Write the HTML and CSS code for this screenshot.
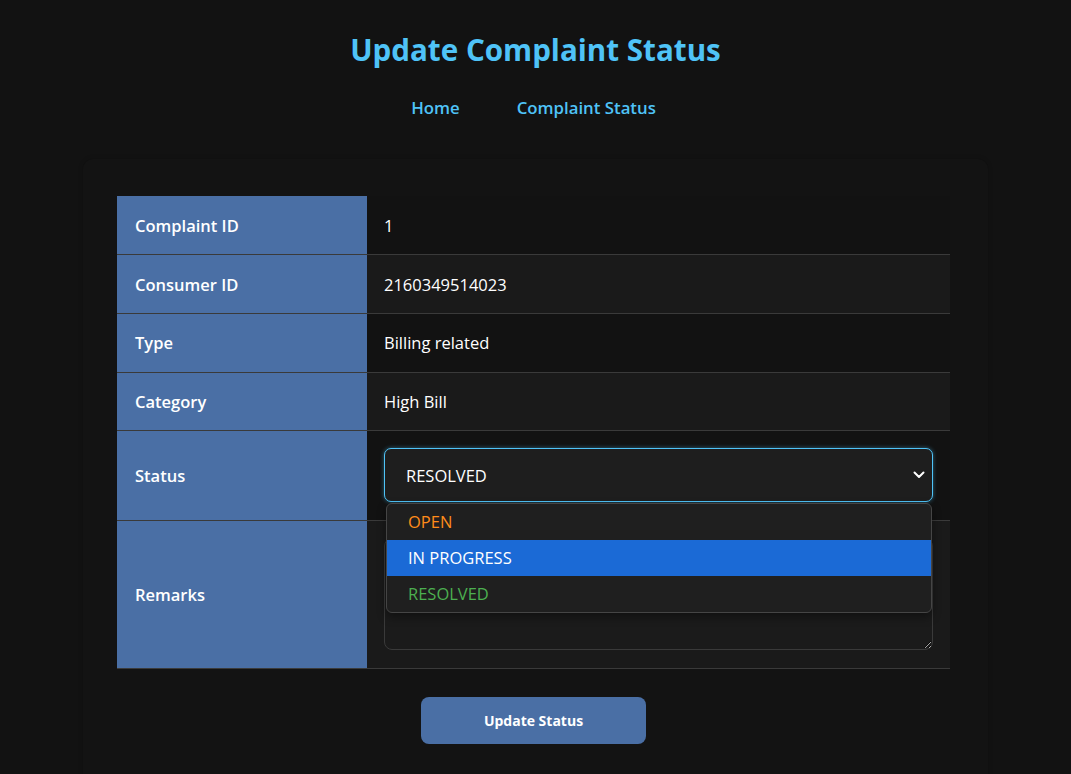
FILE: index.html
```html
<!DOCTYPE html>
<html lang="en">
<head>
<meta charset="utf-8">
<title>Update Complaint Status</title>
<link rel="stylesheet" href="styles.css">
</head>
<body>
<header class="header">
  <h1 class="title">Update Complaint Status</h1>
  <nav class="nav">
    <a class="nav-link" href="#">Home</a>
    <a class="nav-link" href="#">Complaint Status</a>
  </nav>
</header>
<main class="card">
  <form class="form">
    <table class="details">
      <tr class="row">
        <th class="label">Complaint ID</th>
        <td class="value">1</td>
      </tr>
      <tr class="row alt">
        <th class="label">Consumer ID</th>
        <td class="value">2160349514023</td>
      </tr>
      <tr class="row">
        <th class="label">Type</th>
        <td class="value">Billing related</td>
      </tr>
      <tr class="row alt">
        <th class="label">Category</th>
        <td class="value">High Bill</td>
      </tr>
      <tr class="row">
        <th class="label">Status</th>
        <td class="value field-cell">
          <div class="select-wrap">
            <div class="select">
              <span>RESOLVED</span>
              <svg class="chevron" width="12" height="8" viewBox="0 0 12 8"><path d="M1.5 1.5 L6 6 L10.5 1.5" fill="none" stroke="#ffffff" stroke-width="2" stroke-linecap="round" stroke-linejoin="round"/></svg>
            </div>
            <ul class="options">
              <li class="option open">OPEN</li>
              <li class="option active">IN PROGRESS</li>
              <li class="option resolved">RESOLVED</li>
            </ul>
          </div>
        </td>
      </tr>
      <tr class="row alt">
        <th class="label">Remarks</th>
        <td class="value field-cell">
          <textarea class="remarks"></textarea>
        </td>
      </tr>
    </table>
    <div class="actions">
      <button type="button" class="btn">Update Status</button>
    </div>
  </form>
</main>
</body>
</html>
```

FILE: styles.css
```css
* { box-sizing: border-box; }

html, body {
  margin: 0;
  padding: 0;
  background: #121212;
  height: 100%;
  overflow: hidden;
}

body {
  font-family: "Open Sans", "Noto Sans", sans-serif;
  color: #ffffff;
}

.header {
  text-align: center;
  padding-top: 29px;
}

.title {
  margin: 0;
  font-size: 29.6px;
  line-height: 42px;
  font-weight: 700;
  color: #4fc3f7;
}

.nav {
  display: flex;
  justify-content: center;
  gap: 57px;
  margin-top: 25px;
  padding-right: 4px;
}

.nav-link {
  color: #4fc3f7;
  font-size: 16.8px;
  font-weight: 600;
  text-decoration: none;
  line-height: 24px;
}

.card {
  width: 905px;
  margin: 39px auto 0;
  padding: 37px 38px 60px 34px;
  background: #131313;
  border-radius: 10px;
  box-shadow: 0 0 5px rgba(0, 0, 0, 0.2);
}

.details {
  width: 833px;
  border-collapse: collapse;
}

.row { border-bottom: 1px solid #3a3a3a; }

.label {
  width: 250px;
  background: #4a6fa5;
  text-align: left;
  font-size: 16.5px;
  font-weight: 600;
  padding: 0 18px;
  height: 58.7px;
  color: #ffffff;
}

.value {
  background: #121212;
  font-size: 16.5px;
  padding: 0 17px;
  height: 58.7px;
  color: #ffffff;
}

.row.alt .value { background: #1a1a1a; }

.field-cell { padding: 17px 17px 18px; }

.select-wrap { position: relative; }

.select {
  height: 54px;
  display: flex;
  align-items: center;
  justify-content: space-between;
  padding: 0 7px 0 21px;
  background: #1e1e1e;
  border: 1px solid #4fc3f7;
  border-radius: 7px;
  box-shadow: 0 0 4px rgba(79, 195, 247, 0.45);
  font-size: 16.5px;
}

.options {
  position: absolute;
  left: 2px;
  right: 1px;
  top: 55px;
  margin: 0;
  padding: 0;
  list-style: none;
  background: #1f1f1f;
  border: 1px solid #454545;
  border-radius: 6px;
  overflow: hidden;
  z-index: 2;
  box-shadow: 0 4px 10px rgba(0,0,0,0.4);
}

.option {
  height: 36px;
  line-height: 36px;
  padding-left: 21px;
  font-size: 16.5px;
}

.option.open { color: #ff8c1a; }
.option.active { background: #1b6ad6; color: #ffffff; }
.option.resolved { color: #4caf50; }

.remarks {
  display: block;
  width: 100%;
  height: 112px;
  background: #1b1b1b;
  border: 1px solid #3a3a3a;
  border-radius: 8px;
  color: #ffffff;
  resize: vertical;
  font-family: inherit;
}

.actions {
  width: 833px;
  display: flex;
  justify-content: center;
  padding-top: 28px;
}

.btn {
  width: 225px;
  height: 47px;
  background: #4a6fa5;
  color: #ffffff;
  border: none;
  border-radius: 8px;
  font-family: inherit;
  font-size: 14px;
  font-weight: 700;
}
```
